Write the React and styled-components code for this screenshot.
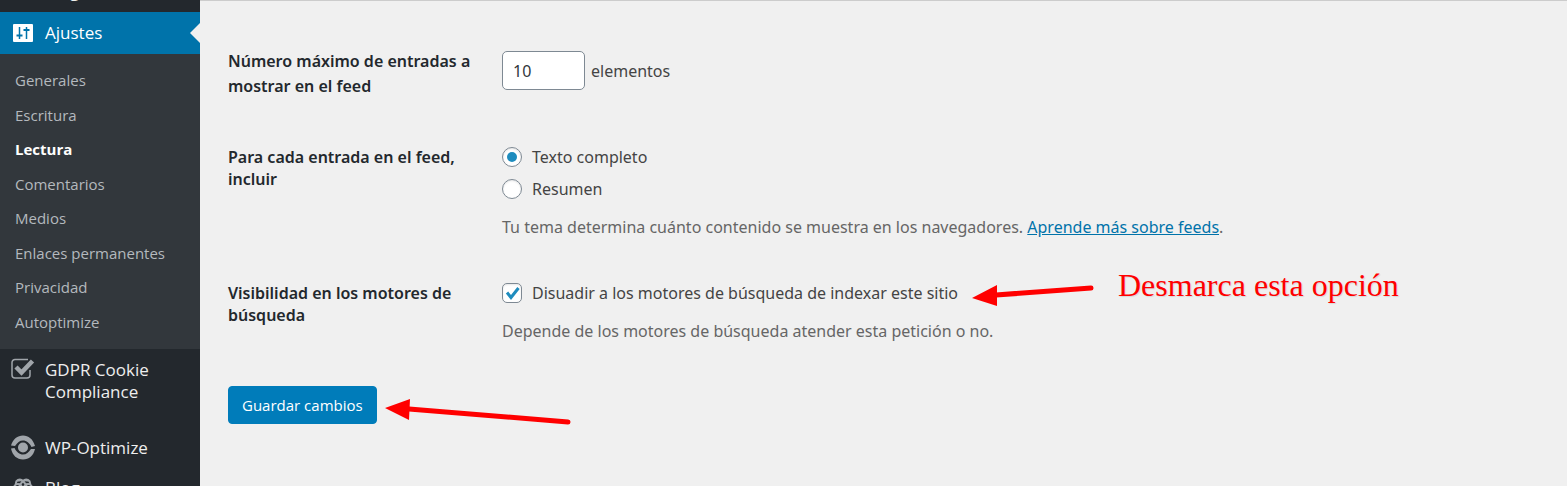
import React, { useState } from 'react';
import styled, { createGlobalStyle } from 'styled-components';

const GlobalStyle = createGlobalStyle`
  * {
    box-sizing: border-box;
  }

  body {
    margin: 0;
    background: #f0f0f0;
    font-family: 'Open Sans', 'Noto Sans', sans-serif;
    overflow: hidden;
  }
`;

const Page = styled.div`
  display: flex;
  height: 100vh;
  overflow: hidden;
`;

const Sidebar = styled.nav`
  flex: 0 0 200px;
  background: #23282d;
  overflow: hidden;
`;

const MenuLink = styled.a`
  display: flex;
  align-items: flex-start;
  gap: 10px;
  padding: 10px 10px 10px 11px;
  position: relative;
  color: ${(props) => (props.$active ? '#fff' : '#eee')};
  background: ${(props) => (props.$active ? '#0073aa' : 'transparent')};
  font-size: 17px;
  line-height: 22px;
  text-decoration: none;

  svg {
    flex: 0 0 24px;
    overflow: visible;
  }
`;

const ScrolledLink = styled(MenuLink)`
  margin-top: -30px;
`;

const Notch = styled.span`
  position: absolute;
  right: 0;
  top: 11px;
  border: 10px solid transparent;
  border-left: 0;
  border-right-color: #f0f0f0;
`;

const SubmenuBox = styled.div`
  padding: 9px 0 10px;
  background: #32373c;
`;

const Submenu = styled.ul`
  display: grid;
  grid-auto-rows: 1fr;
  height: 276px;
  margin: 0;
  padding: 0 15px;
  list-style: none;
`;

const SubItem = styled.li`
  display: flex;
  align-items: center;
`;

const SubLink = styled.a`
  color: ${(props) => (props.$current ? '#fff' : '#b4b9be')};
  font-size: 15px;
  font-weight: ${(props) => (props.$current ? 700 : 400)};
  text-decoration: none;
`;

const PluginMenu = styled.div`
  display: grid;
  gap: 2px;
  padding-top: 2px;
`;

const PluginLink = styled(MenuLink)`
  padding-top: 8px;
  padding-bottom: ${(props) => (props.$tall ? 24 : 8)}px;
`;

const Main = styled.main`
  flex: 1;
  position: relative;
  border-top: 1px solid #ccc;
  padding: 48px 28px 0;
  font-family: 'Noto Sans', 'Open Sans', sans-serif;
`;

const Row = styled.div`
  display: grid;
  grid-template-columns: 250px 1fr;
  column-gap: 24px;
  margin-bottom: ${(props) => props.$space}px;
`;

const Heading = styled.div`
  color: #23282d;
  font-size: 16px;
  font-weight: 600;
  line-height: ${(props) => props.$line || 22}px;
`;

const Fields = styled.div`
  display: flex;
  flex-direction: column;
  gap: 10px;
`;

const Inline = styled.div`
  display: flex;
  align-items: center;
  align-self: start;
  gap: 6px;
  height: 43px;
  color: #444;
  font-size: 16px;
`;

const NumberInput = styled.input`
  width: 83px;
  height: 39px;
  padding: 0 10px;
  border: 1px solid #7e8993;
  border-radius: 5px;
  background: #fff;
  color: #32373c;
  font: inherit;
  appearance: textfield;

  &::-webkit-inner-spin-button {
    display: none;
  }
`;

const Choice = styled.label`
  display: flex;
  align-items: center;
  align-self: flex-start;
  gap: 10px;
  color: #444;
  font-size: 16px;
  line-height: 22px;
`;

const Toggle = styled.input`
  appearance: none;
  width: 20px;
  height: 20px;
  margin: 0;
  border: 1px solid #7e8993;
  border-radius: ${(props) => (props.type === 'radio' ? '50%' : '5px')};
  background: #fff;
  box-shadow: inset 0 1px 2px rgba(0, 0, 0, 0.1);
`;

const Radio = styled(Toggle)`
  display: grid;
  place-items: center;

  &:checked::before {
    content: '';
    width: 10px;
    height: 10px;
    border-radius: 50%;
    background: #1e8cbe;
  }
`;

const CheckWrap = styled.span`
  display: grid;

  > * {
    grid-area: 1 / 1;
  }

  svg {
    pointer-events: none;
  }
`;

const Description = styled.p`
  margin: 5px 0 0;
  color: #666;
  font-size: 16px;
  line-height: 24px;

  a {
    color: #0073aa;
  }
`;

const SaveButton = styled.button`
  height: 38px;
  padding: 0 13px;
  border: 1px solid #007cba;
  border-radius: 4px;
  background: #007cba;
  color: #fff;
  font-family: 'Open Sans', sans-serif;
  font-size: 15px;
`;

const Marks = styled.svg`
  position: absolute;
  left: 0;
  top: -1px;
  pointer-events: none;
`;

const Note = styled.div`
  position: absolute;
  left: 918px;
  top: 266px;
  color: #f00;
  font-family: 'Liberation Serif', serif;
  font-size: 32px;
  line-height: 36px;
  white-space: nowrap;
  text-shadow: 1px 1px 1px rgba(0, 0, 0, 0.1);
`;

const SlidersIcon = () => (
  <svg width="24" height="22" viewBox="0 0 24 22">
    <rect x="2" y="2" width="20" height="18" rx="1" fill="#fff" />
    <path d="M8.5 5v12M15.5 5v12" stroke="#0073aa" strokeWidth="1.5" />
    <path d="M5.5 13.500h6M12.5 8h6" stroke="#0073aa" strokeWidth="2" />
  </svg>
);

const GdprIcon = () => (
  <svg width="24" height="22" viewBox="0 0 24 22" fill="none">
    <path d="M17 0.5H4A3 3 0 0 0 1 3.5V16a3 3 0 0 0 3 3h12a3 3 0 0 0 3-3v-5" stroke="#a0a5aa" strokeWidth="1.5" />
    <path d="M5 8l5.500 5.500L21.500 2" stroke="#a0a5aa" strokeWidth="4.500" />
  </svg>
);

const OptimizeIcon = () => (
  <svg width="24" height="22" viewBox="0 1 24 22" fill="#a0a5aa">
    <circle cx="12" cy="11.500" r="5" />
    <path d="M0 9.500C2 3 6.500-0.500 12-0.500S22 3 24 10L20.500 11C18.500 7 15.500 4.500 12 4.500S6.500 6.500 4 10z" />
    <path d="M0 12.500L3.500 12C5.500 16 8.500 18.500 12 18.500S17.500 16.500 20 13H24C22.500 19.500 18 23.500 12 23.500S1.500 19.500 0 12.500z" />
  </svg>
);

const KnotIcon = () => (
  <svg width="24" height="22" viewBox="0 0 24 22" fill="none" stroke="#a0a5aa" strokeWidth="2">
    <path d="M5 8C4 3 9 1 12 4C15 1 20 3 19 8M7 4C10 2 14 5 16 10M17 4C14 2 10 5 8 10" />
    <circle cx="7" cy="11" r="4" />
    <circle cx="17" cy="11" r="4" />
  </svg>
);

const submenu = [
  'Generales',
  'Escritura',
  'Lectura',
  'Comentarios',
  'Medios',
  'Enlaces permanentes',
  'Privacidad',
  'Autoptimize',
];

function App() {
  const [count, setCount] = useState(10);
  const [feed, setFeed] = useState('full');
  const [hidden, setHidden] = useState(true);

  return (
    <Page>
      <GlobalStyle />
      <Sidebar>
        <ScrolledLink href="#plugins">
          <svg width="24" height="22" />
          Plugins
        </ScrolledLink>
        <MenuLink href="#ajustes" $active>
          <SlidersIcon />
          Ajustes
          <Notch />
        </MenuLink>
        <SubmenuBox>
          <Submenu>
            {submenu.map((name) => (
              <SubItem key={name}>
                <SubLink href="#ajustes" $current={name === 'Lectura'}>{name}</SubLink>
              </SubItem>
            ))}
          </Submenu>
        </SubmenuBox>
        <PluginMenu>
          <PluginLink href="#gdpr" $tall>
            <GdprIcon />
            GDPR Cookie Compliance
          </PluginLink>
          <PluginLink href="#optimize">
            <OptimizeIcon />
            WP-Optimize
          </PluginLink>
          <PluginLink href="#blog">
            <KnotIcon />
            Blog
          </PluginLink>
        </PluginMenu>
      </Sidebar>

      <Main>
        <Row $space={47}>
          <Heading $line={25}>
            <label htmlFor="count">Número máximo de entradas a mostrar en el feed</label>
          </Heading>
          <Inline>
            <NumberInput id="count" type="number" value={count} onChange={(e) => setCount(e.target.value)} />
            elementos
          </Inline>
        </Row>

        <Row $space={43} role="radiogroup" aria-labelledby="feed-title">
          <Heading id="feed-title">Para cada entrada en el feed, incluir</Heading>
          <Fields>
            <Choice>
              <Radio type="radio" name="feed" checked={feed === 'full'} onChange={() => setFeed('full')} />
              Texto completo
            </Choice>
            <Choice>
              <Radio type="radio" name="feed" checked={feed === 'summary'} onChange={() => setFeed('summary')} />
              Resumen
            </Choice>
            <Description>
              Tu tema determina cuánto contenido se muestra en los navegadores. <a href="#feeds">Aprende más sobre feeds</a>.
            </Description>
          </Fields>
        </Row>

        <Row $space={43}>
          <Heading>Visibilidad en los motores de búsqueda</Heading>
          <Fields>
            <Choice>
              <CheckWrap>
                <Toggle type="checkbox" checked={hidden} onChange={() => setHidden(!hidden)} />
                {hidden && (
                  <svg width="20" height="20" viewBox="0 0 20 20" fill="none">
                    <path d="M5 9.500l4 5L16.500 5" stroke="#1e8cbe" strokeWidth="3" />
                  </svg>
                )}
              </CheckWrap>
              Disuadir a los motores de búsqueda de indexar este sitio
            </Choice>
            <Description>Depende de los motores de búsqueda atender esta petición o no.</Description>
          </Fields>
        </Row>

        <SaveButton type="button">Guardar cambios</SaveButton>

        <Marks width="920" height="440" viewBox="200 0 920 440">
          <path d="M996 295L1091 288M409 409L568 422" stroke="#f00" strokeWidth="5" strokeLinecap="round" />
          <path d="M972 298l25-13v21zM385 408l25-9-1 21z" fill="#f00" />
        </Marks>
        <Note>Desmarca esta opción</Note>
      </Main>
    </Page>
  );
}

export default App;
